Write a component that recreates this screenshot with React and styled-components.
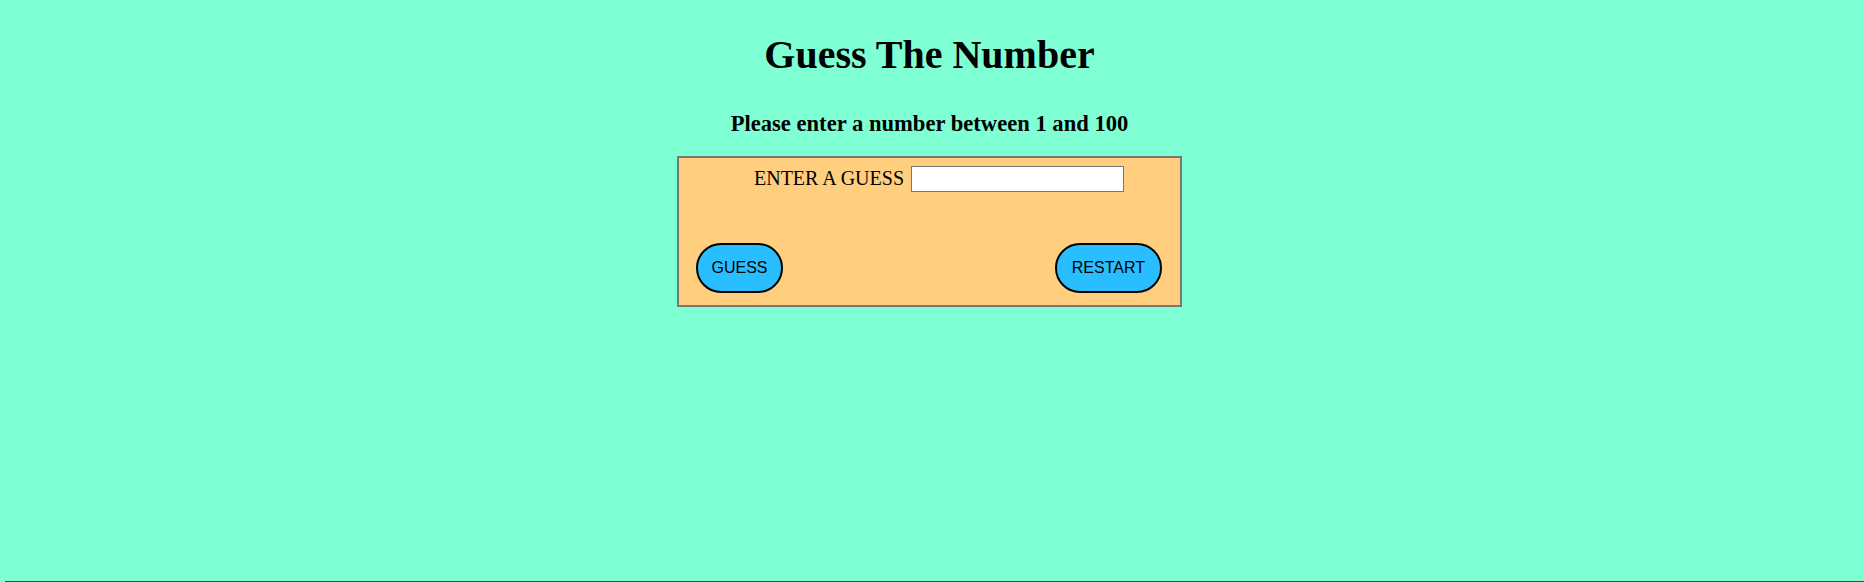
import React from "react";
import styled, { createGlobalStyle } from "styled-components";

const Global = createGlobalStyle`
  html, body { margin: 0; padding: 0; background: #7fffd4; }
  body { font-family: "Liberation Serif", "Times New Roman", serif; color: #000; }
`;

const Page = styled.div`
  box-sizing: border-box;
  min-height: 581px;
  padding: 33px 5px 0 0;
  display: flex;
  flex-direction: column;
  align-items: center;
`;

const Title = styled.h1`
  margin: 0;
  font-size: 40px;
  line-height: 44px;
  font-weight: 700;
`;

const Subtitle = styled.h3`
  margin: 35px 0 0;
  font-size: 22.6px;
  line-height: 24px;
  font-weight: 700;
`;

const Card = styled.div`
  box-sizing: border-box;
  width: 505px;
  margin-top: 20px;
  background: #ffce7f;
  border: 2px solid #777;
  padding: 8px 18px 12px 17px;
  display: flex;
  flex-direction: column;
  gap: 51px;
`;

const GuessRow = styled.div`
  display: flex;
  justify-content: center;
  align-items: center;
  gap: 7px;
  padding-left: 20px;
  height: 26px;
`;

const Label = styled.label`
  font-size: 20px;
  line-height: 22px;
  padding-bottom: 3px;
`;

const Input = styled.input`
  box-sizing: border-box;
  width: 213px;
  height: 26px;
  border: 1px solid #767676;
  background: #fff;
  padding: 2px 4px;
  margin: 0;
  font: 16px "Liberation Sans", Arial, sans-serif;
  outline: none;
`;

const ButtonRow = styled.div`
  display: flex;
  justify-content: space-between;
  align-items: center;
`;

const Pill = styled.button`
  box-sizing: border-box;
  height: 50px;
  padding: 0 ${(p) => p.$px}px;
  border: 2px solid #000;
  border-radius: 25px;
  background: #29beff;
  color: #000;
  font: 16px "Liberation Sans", Arial, sans-serif;
  line-height: 18px;
  cursor: pointer;
`;

const Rule = styled.div`
  height: 1px;
  margin-left: 5px;
  background: #3c4a45;
`;

export default function App() {
  return (
    <>
      <Global />
      <Page>
        <Title>Guess The Number</Title>
        <Subtitle>Please enter a number between 1 and 100</Subtitle>
        <Card>
          <GuessRow>
            <Label htmlFor="guess">ENTER A GUESS</Label>
            <Input id="guess" type="text" />
          </GuessRow>
          <ButtonRow>
            <Pill $px={13.5}>GUESS</Pill>
            <Pill $px={15}>RESTART</Pill>
          </ButtonRow>
        </Card>
      </Page>
      <Rule />
    </>
  );
}
